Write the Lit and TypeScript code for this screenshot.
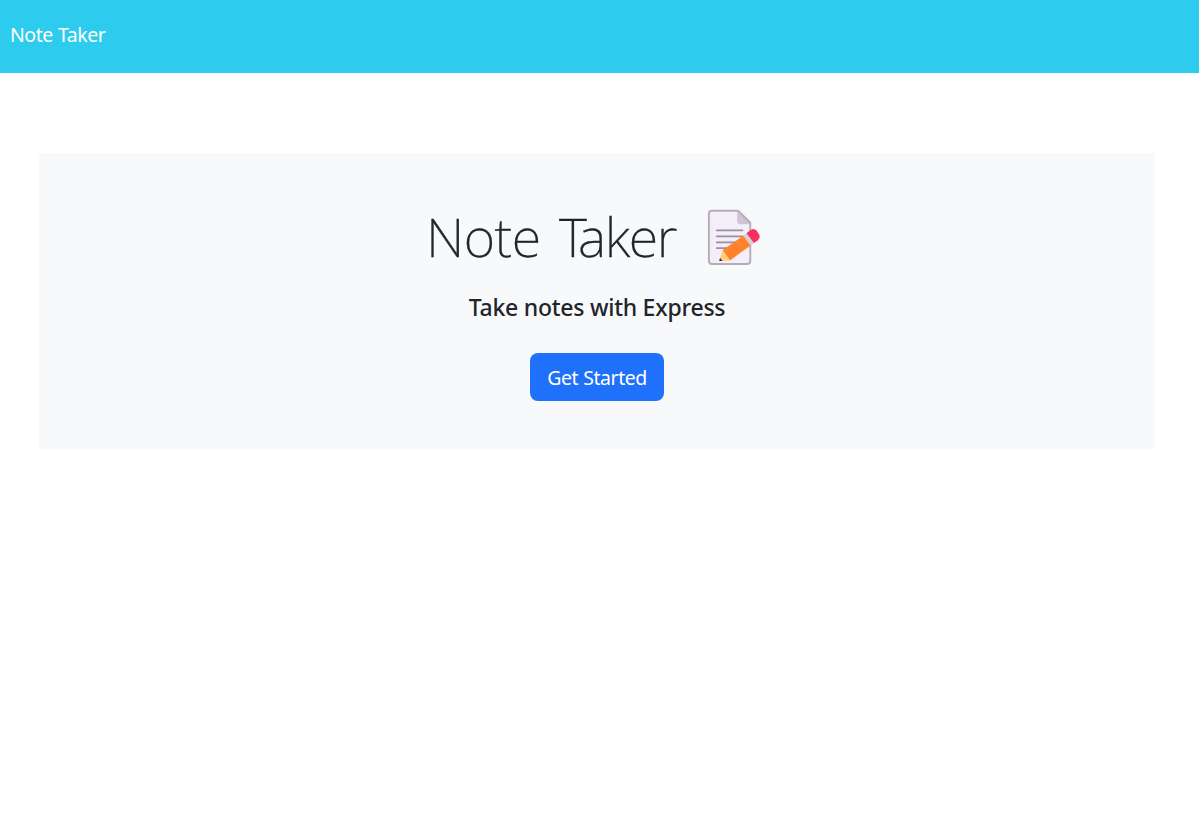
import { LitElement, html, css } from "lit";
import { customElement } from "lit/decorators.js";

@customElement("memo-icon")
class MemoIcon extends LitElement {
  static styles = css`
    :host { display: block; width: 54px; height: 58px; }
    .icon { display: block; }
  `;
  render() {
    return html`<svg class="icon" width="54" height="58" viewBox="707 208 54 58">
      <path d="M711.5 210.7H738L750.3 223V260.7Q750.3 264 747 264H712Q708.9 264 708.9 260.7V213.7Q708.9 210.7 711.5 210.7Z" fill="#f3eef8" stroke="#b4acbc" stroke-width="1.9"/>
      <path d="M737.2 211.2L750.3 224.2H740.2Q737.2 224.2 737.2 221.2Z" fill="#cdc4d6"/>
      <path d="M738 210.7L750.4 223" stroke="#b4acbc" stroke-width="1.8"/>
      <path d="M716.9 230.4H742.4M716.9 236.4H742.4M716.9 242.4H738M716.9 248.2H733" stroke="#998ea4" stroke-width="1.8" stroke-linecap="round"/>
      <path d="M722.6 250.3L743.4 235.4L750.6 245.4L729.9 260.4Z" fill="#ff822d"/>
      <path d="M722.6 250.3L729.9 260.4L719.9 261.1Q719.2 261 719.4 260Z" fill="#ffce7c"/>
      <path d="M720.1 257.9L722.5 260.9L719.8 261.1Q719.1 261 719.4 259.9Z" fill="#402a32"/>
      <path d="M743.4 235.4L747 232.9L754.2 242.9L750.6 245.4Z" fill="#d3d3d3"/>
      <path d="M746.5 233.2L750.4 230.2Q754 227.7 756.7 230.7L759 234.2Q760.8 237.2 757.8 240.2L754 243Z" fill="#fa2f60"/>
    </svg>`;
  }
}

@customElement("app-root")
class AppRoot extends LitElement {
  static styles = css`
    :host {
      display: block;
      min-height: 838px;
      background: #fff;
      color: #212529;
      font-family: "Noto Sans", "Open Sans", sans-serif;
    }
    .nav {
      box-sizing: border-box;
      height: 73px;
      padding: 20px 10px;
      background: #2dcbee;
    }
    .brand {
      display: block;
      color: #fff;
      text-decoration: none;
      font-size: 19.5px;
      line-height: 30px;
      letter-spacing: -0.45px;
      word-spacing: 0.5px;
      white-space: nowrap;
    }
    .hero {
      box-sizing: border-box;
      display: flex;
      flex-direction: column;
      align-items: center;
      height: 296px;
      margin: 80px 44px 0 39px;
      padding-top: 48px;
      background: #f8f9fb;
    }
    .title {
      display: flex;
      align-items: center;
      justify-content: space-between;
      width: 336px;
      height: 72px;
      margin: 0;
      padding-right: 8px;
      font-size: 54px;
      font-weight: 200;
      letter-spacing: -0.6px;
      word-spacing: 5px;
      line-height: 72px;
      white-space: nowrap;
      -webkit-text-stroke: 0.3px #212529;
    }
    .words { padding: 0 0 2px 1px; }
    .cap { letter-spacing: -8.8px; }
    .tight { letter-spacing: -1.4px; }
    .subtitle {
      margin: 19px 0 0;
      font-size: 23px;
      font-weight: 500;
      letter-spacing: -0.25px;
      line-height: 31px;
      white-space: nowrap;
    }
    .start {
      width: 134px;
      height: 48px;
      margin-top: 30px;
      padding: 1px 0 0;
      border: 0;
      border-radius: 8px;
      background: #1f70fa;
      color: #fff;
      font: 400 19.5px/47px "Noto Sans", "Open Sans", sans-serif;
      letter-spacing: -0.45px;
      word-spacing: 0.5px;
      white-space: nowrap;
    }
  `;
  render() {
    return html`
      <nav class="nav"><a class="brand" href="#">Note Taker</a></nav>
      <main class="hero">
        <h1 class="title"><span class="words">Note <span class="cap">T</span><span class="tight">aker</span></span><memo-icon></memo-icon></h1>
        <h4 class="subtitle">Take notes with Express</h4>
        <button class="start">Get Started</button>
      </main>
    `;
  }
}
